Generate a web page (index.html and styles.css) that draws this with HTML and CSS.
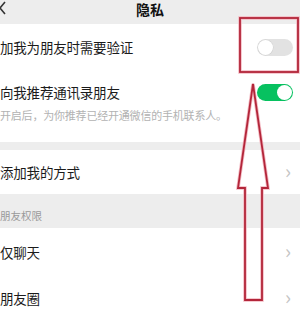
FILE: index.html
```html
<!DOCTYPE html>
<html lang="zh-CN">
<head>
    <meta charset="UTF-8">
    <meta name="viewport" content="width=device-width, initial-scale=1.0">
    <title>隐私</title>
    <link rel="stylesheet" href="styles.css">
</head>
<body>
    <div class="screen">
        <div class="nav">
            <svg class="back" width="8" height="14" viewBox="0 0 8 14"><path d="M6 1 L1 7 L6 13" fill="none" stroke="#333" stroke-width="1.6"/></svg>
            <span class="nav-title">隐私</span>
        </div>

        <div class="group first">
            <div class="row row-main">
                <span class="label">加我为朋友时需要验证</span>
                <span class="switch"><span class="knob"></span></span>
            </div>
            <div class="row row-toggle">
                <span class="label">向我推荐通讯录朋友</span>
                <span class="switch on"><span class="knob"></span></span>
            </div>
            <p class="hint">开启后，为你推荐已经开通微信的手机联系人。</p>
        </div>

        <div class="group">
            <div class="row row-link">
                <span class="label">添加我的方式</span>
                <span class="chevron">›</span>
            </div>
        </div>

        <div class="section-title">朋友权限</div>

        <div class="group last">
            <div class="row row-link tall">
                <span class="label">仅聊天</span>
                <span class="chevron">›</span>
            </div>
            <div class="row row-link">
                <span class="label">朋友圈</span>
                <span class="chevron">›</span>
            </div>
        </div>

        <!-- annotation drawn over the screenshot -->
        <svg class="mark" width="300" height="329" viewBox="0 0 300 329">
            <rect x="240" y="18" width="58" height="54" fill="none" stroke="#f3b9c2" stroke-width="3.5"/>
            <rect x="240" y="18" width="58" height="54" fill="none" stroke="#b3263a" stroke-width="1.8"/>
            <path d="M253 84 L238 188 L245 188 L245 300 L262 300 L262 188 L268 188 Z" fill="none" stroke="#f3b9c2" stroke-width="3.5" stroke-linejoin="miter"/>
            <path d="M253 84 L238 188 L245 188 L245 300 L262 300 L262 188 L268 188 Z" fill="none" stroke="#b3263a" stroke-width="1.8" stroke-linejoin="miter"/>
        </svg>
    </div>
</body>
</html>
```

FILE: styles.css
```css
body {
    margin: 0;
    background: #ffffff;
    font-family: "Noto Sans CJK SC", "Noto Sans", sans-serif;
    color: #1b1b1b;
}
.screen {
    position: relative;
    width: 300px;
    height: 329px;
    overflow: hidden;
    background: #ffffff;
}
.nav {
    height: 24px;
    background: #ededed;
    display: flex;
    align-items: center;
    justify-content: center;
    position: relative;
}
.back {
    position: absolute;
    left: -1px;
    top: 1px;
}
.nav-title {
    font-size: 14px;
    line-height: 16px;
    font-weight: bold;
    color: #111;
    margin-top: -7px;
}
.group {
    background: #ffffff;
}
.group.first {
    padding-bottom: 20px;
    border-bottom: 8px solid #ededed;
}
.row {
    display: flex;
    align-items: center;
    justify-content: space-between;
    padding-right: 7px;
}
.row-main {
    height: 46px;
}
.row-toggle {
    height: 44px;
}
.row-link {
    height: 44px;
}
.row-link.tall {
    height: 48px;
}
.label {
    font-size: 13.5px;
    letter-spacing: -0.2px;
    color: #1b1b1b;
}
.hint {
    margin: -6px 0 0;
    font-size: 11px;
    line-height: 14px;
    color: #b2b2b2;
    letter-spacing: -0.2px;
}
.switch {
    width: 36px;
    height: 17px;
    border-radius: 9px;
    background: #e2e2e2;
    position: relative;
}
.switch .knob {
    position: absolute;
    left: 1px;
    top: 1px;
    width: 15px;
    height: 15px;
    border-radius: 50%;
    background: #ffffff;
    box-shadow: 0 0 0 0.5px #d0d0d0;
}
.switch.on {
    background: #07c160;
}
.switch.on .knob {
    left: 20px;
    box-shadow: none;
}
.chevron {
    font-size: 20px;
    line-height: 20px;
    color: #c4c4c4;
    margin-right: 2px;
    margin-top: -3px;
}
.section-title {
    height: 34px;
    background: #ededed;
    font-size: 10.5px;
    color: #9a9a9a;
    display: flex;
    align-items: flex-end;
    padding-bottom: 5px;
    box-sizing: border-box;
}
.mark {
    position: absolute;
    left: 0;
    top: 0;
    pointer-events: none;
}
```
